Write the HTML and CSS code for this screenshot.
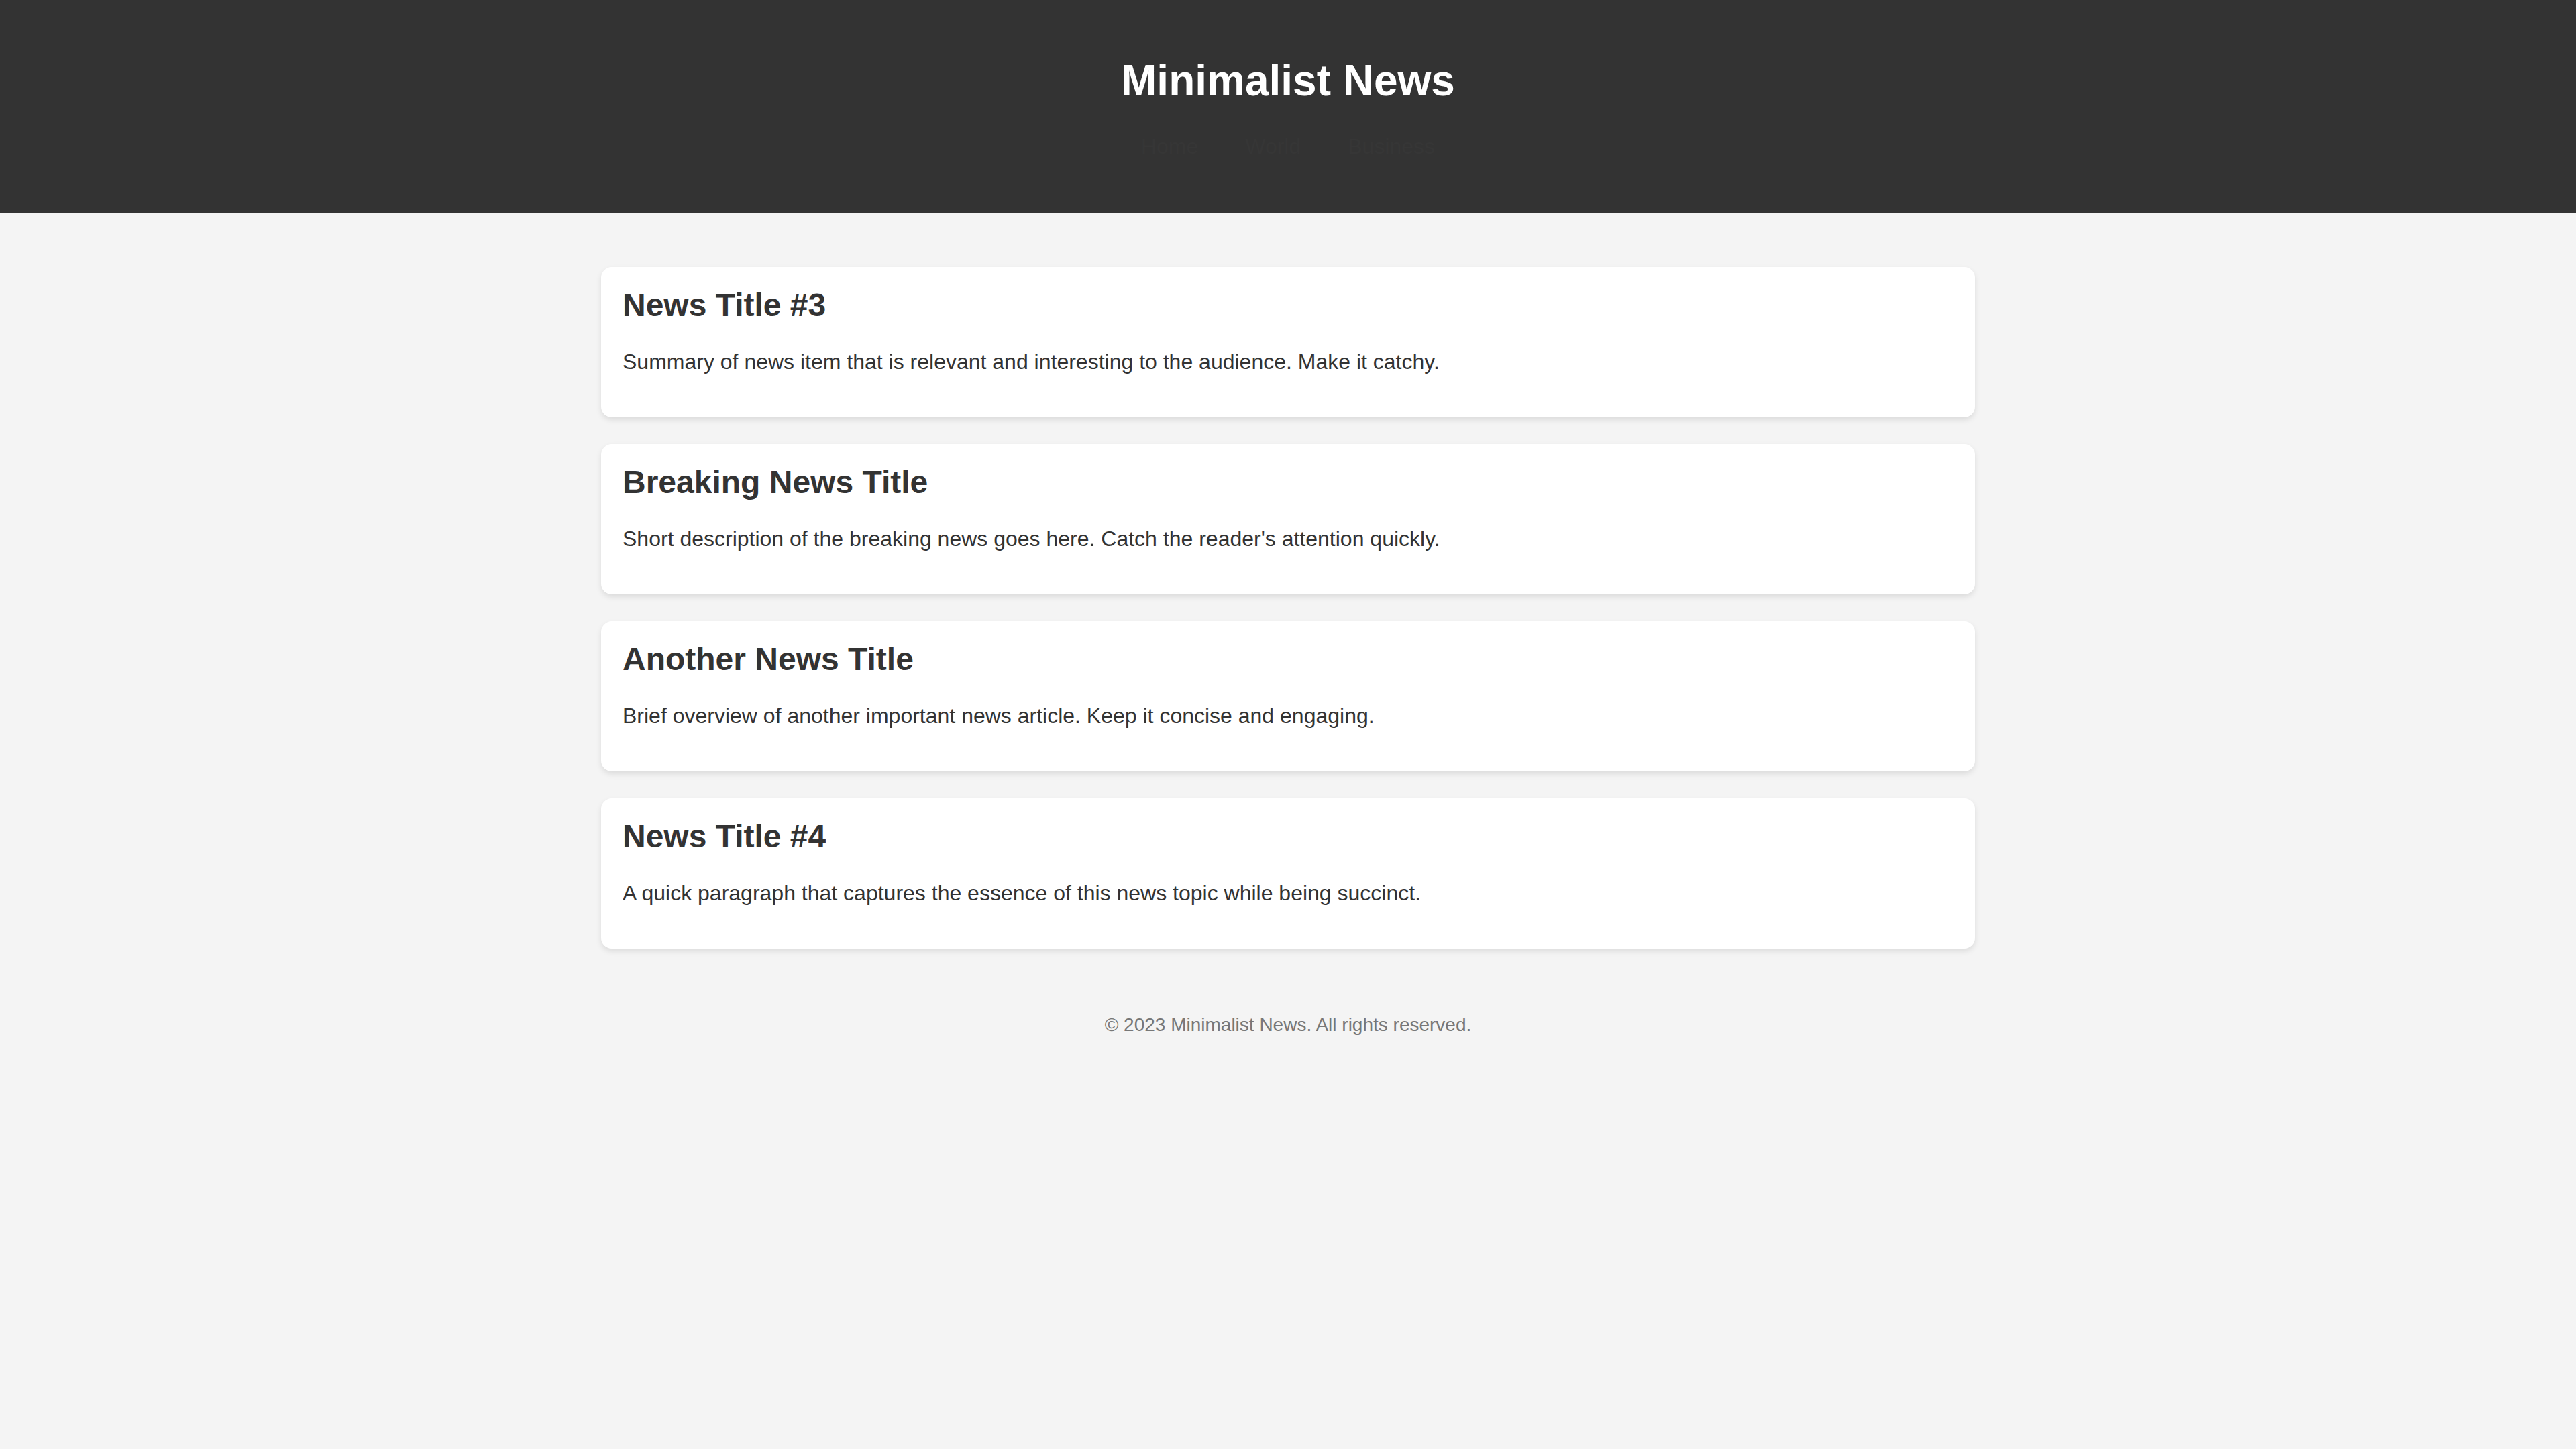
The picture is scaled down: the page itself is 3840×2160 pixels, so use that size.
FILE: index.html
```html
<!DOCTYPE html>
<html lang="en">
<head>
<meta charset="utf-8">
<title>Minimalist News</title>
<link rel="stylesheet" href="styles.css">
</head>
<body>
<header class="site-header">
  <h1 class="site-title">Minimalist News</h1>
  <nav class="site-nav">
    <ul class="nav-list">
      <li class="nav-item"><a class="nav-link" href="#">Home</a></li>
      <li class="nav-item"><a class="nav-link" href="#">World</a></li>
      <li class="nav-item"><a class="nav-link" href="#">Business</a></li>
    </ul>
  </nav>
</header>
<main class="news">
  <article class="card">
    <h2 class="card-title">News Title #3</h2>
    <p class="card-text">Summary of news item that is relevant and interesting to the audience. Make it catchy.</p>
  </article>
  <article class="card">
    <h2 class="card-title">Breaking News Title</h2>
    <p class="card-text">Short description of the breaking news goes here. Catch the reader's attention quickly.</p>
  </article>
  <article class="card">
    <h2 class="card-title">Another News Title</h2>
    <p class="card-text">Brief overview of another important news article. Keep it concise and engaging.</p>
  </article>
  <article class="card">
    <h2 class="card-title">News Title #4</h2>
    <p class="card-text">A quick paragraph that captures the essence of this news topic while being succinct.</p>
  </article>
</main>
<footer class="site-footer">
  <p class="footer-text">© 2023 Minimalist News. All rights reserved.</p>
</footer>
</body>
</html>
```

FILE: styles.css
```css
html, body {
  margin: 0;
  padding: 0;
}
body {
  background: #f4f4f4;
  font-family: "Liberation Sans", Arial, Helvetica, sans-serif;
  color: #333;
  min-height: 2160px;
}
.site-header {
  background: #333;
  color: #fff;
  text-align: center;
  padding: 40px 0;
}
.site-title {
  font-size: 64px;
  font-weight: bold;
  margin: 43px 0;
  line-height: normal;
}
.site-nav {
  margin: 0 0 40px;
}
.nav-list {
  list-style: none;
  margin: 0;
  padding: 0;
  display: flex;
  justify-content: center;
  gap: 70px;
  font-size: 32px;
  line-height: 37px;
}
.nav-link {
  color: #363636;
  text-decoration: none;
}
.news {
  width: 2048px;
  margin: 0 auto;
  padding: 81px 0 80px;
  display: flex;
  flex-direction: column;
  gap: 40px;
}
.card {
  background: #fff;
  border-radius: 16px;
  box-shadow: 0 4px 8px rgba(0, 0, 0, 0.1);
  padding: 29px 32px 32px;
}
.card-title {
  font-size: 48px;
  font-weight: bold;
  color: #333;
  margin: 0 0 39px;
  line-height: normal;
}
.card-text {
  font-size: 32px;
  color: #333;
  margin: 0 0 32px;
  line-height: normal;
}
.site-footer {
  text-align: center;
  padding: 18px 0;
}
.footer-text {
  margin: 0;
  font-size: 28px;
  color: #777;
}
```
